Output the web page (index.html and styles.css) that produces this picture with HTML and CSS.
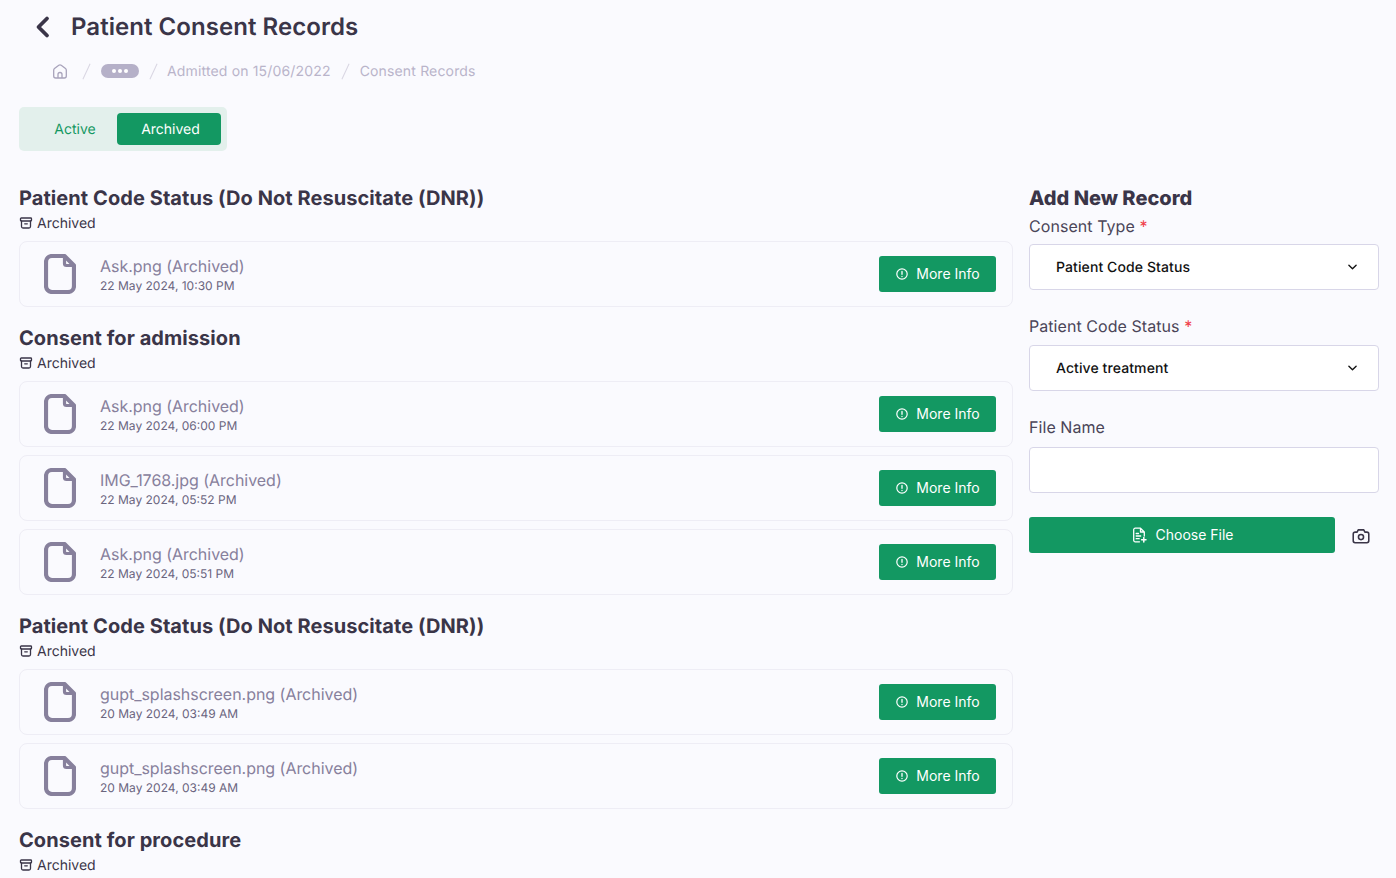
FILE: index.html
```html
<!DOCTYPE html>
<html lang="en">
<head>
    <meta charset="UTF-8">
    <meta name="viewport" content="width=device-width, initial-scale=1.0">
    <title>Patient Consent Records</title>
    <link rel="stylesheet" href="styles.css">
</head>
<body>

<svg class="sprite" width="0" height="0">
    <symbol id="i-archive" viewBox="0 0 14 14">
        <rect x="1.500" y="2" width="11" height="3" rx="0.8" fill="none" stroke="currentColor" stroke-width="1.300"/>
        <path d="M2.500 5v5.500a1.500 1.500 0 0 0 1.500 1.500h6a1.500 1.500 0 0 0 1.500-1.500V5M5.700 7.800h2.600" fill="none" stroke="currentColor" stroke-width="1.300" stroke-linecap="round"/>
    </symbol>
    <symbol id="i-file" viewBox="0 0 32 40">
        <path d="M8 2h12.500L30 11.500V32a6 6 0 0 1-6 6H8a6 6 0 0 1-6-6V8a6 6 0 0 1 6-6z" fill="none" stroke="currentColor" stroke-width="4.200" stroke-linejoin="round"/>
        <path d="M20.500 3v6.500a2 2 0 0 0 2 2H29" fill="none" stroke="currentColor" stroke-width="3.200" stroke-linejoin="round"/>
    </symbol>
    <symbol id="i-info" viewBox="0 0 14 14">
        <circle cx="7" cy="7" r="5.200" fill="none" stroke="currentColor" stroke-width="1.200"/>
        <path d="M7 4.500v2.800M7 9.300v.2" fill="none" stroke="currentColor" stroke-width="1.300" stroke-linecap="round"/>
    </symbol>
    <symbol id="i-chevron" viewBox="0 0 10 6">
        <path d="M1 1l4 4 4-4" fill="none" stroke="currentColor" stroke-width="1.500" stroke-linecap="round" stroke-linejoin="round"/>
    </symbol>
</svg>

<header class="top">
    <svg class="back" width="16" height="24" viewBox="0 0 16 24"><path d="M13 3.500L4.500 12l8.500 8.500" fill="none" stroke="currentColor" stroke-width="3.800" stroke-linecap="round" stroke-linejoin="round"/></svg>
    <h1>Patient Consent Records</h1>
</header>

<nav class="crumbs">
    <svg class="home" width="16" height="16" viewBox="0 0 16 16"><path d="M1.700 7.200c0-.7.300-1.200.8-1.600l4.300-3.300a2 2 0 0 1 2.400 0l4.300 3.300c.5.400.8.900.8 1.600V13a2 2 0 0 1-2 2H3.700a2 2 0 0 1-2-2zM6 15v-3.500a2 2 0 0 1 4 0V15" fill="none" stroke="currentColor" stroke-width="1.300" stroke-linejoin="round"/></svg>
    <span class="sep sep-first"></span>
    <span class="more"><i></i><i></i><i></i></span>
    <span class="sep sep-text"></span>
    <span>Admitted on 15/06/2022</span>
    <span class="sep"></span>
    <span>Consent Records</span>
</nav>

<div class="tabs">
    <span class="tab">Active</span>
    <span class="tab tab-on">Archived</span>
</div>

<div class="columns">
    <main class="records">
        <section class="group">
            <h2>Patient Code Status (Do Not Resuscitate (DNR))</h2>
            <p class="state"><svg width="14" height="14"><use href="#i-archive"/></svg>Archived</p>
            <div class="record">
                <svg class="doc" width="32" height="40"><use href="#i-file"/></svg>
                <div class="meta"><strong>Ask.png (Archived)</strong><small>22 May 2024, 10:30 PM</small></div>
                <button class="btn"><svg width="14" height="14"><use href="#i-info"/></svg>More Info</button>
            </div>
        </section>

        <section class="group">
            <h2>Consent for admission</h2>
            <p class="state"><svg width="14" height="14"><use href="#i-archive"/></svg>Archived</p>
            <div class="record">
                <svg class="doc" width="32" height="40"><use href="#i-file"/></svg>
                <div class="meta"><strong>Ask.png (Archived)</strong><small>22 May 2024, 06:00 PM</small></div>
                <button class="btn"><svg width="14" height="14"><use href="#i-info"/></svg>More Info</button>
            </div>
            <div class="record">
                <svg class="doc" width="32" height="40"><use href="#i-file"/></svg>
                <div class="meta"><strong>IMG_1768.jpg (Archived)</strong><small>22 May 2024, 05:52 PM</small></div>
                <button class="btn"><svg width="14" height="14"><use href="#i-info"/></svg>More Info</button>
            </div>
            <div class="record">
                <svg class="doc" width="32" height="40"><use href="#i-file"/></svg>
                <div class="meta"><strong>Ask.png (Archived)</strong><small>22 May 2024, 05:51 PM</small></div>
                <button class="btn"><svg width="14" height="14"><use href="#i-info"/></svg>More Info</button>
            </div>
        </section>

        <section class="group">
            <h2>Patient Code Status (Do Not Resuscitate (DNR))</h2>
            <p class="state"><svg width="14" height="14"><use href="#i-archive"/></svg>Archived</p>
            <div class="record">
                <svg class="doc" width="32" height="40"><use href="#i-file"/></svg>
                <div class="meta"><strong>gupt_splashscreen.png (Archived)</strong><small>20 May 2024, 03:49 AM</small></div>
                <button class="btn"><svg width="14" height="14"><use href="#i-info"/></svg>More Info</button>
            </div>
            <div class="record">
                <svg class="doc" width="32" height="40"><use href="#i-file"/></svg>
                <div class="meta"><strong>gupt_splashscreen.png (Archived)</strong><small>20 May 2024, 03:49 AM</small></div>
                <button class="btn"><svg width="14" height="14"><use href="#i-info"/></svg>More Info</button>
            </div>
        </section>

        <section class="group">
            <h2>Consent for procedure</h2>
            <p class="state"><svg width="14" height="14"><use href="#i-archive"/></svg>Archived</p>
        </section>
    </main>

    <aside class="add">
        <h2 class="add-title">Add New Record</h2>
        <label class="field-label field-first">Consent Type <b>*</b></label>
        <div class="select">Patient Code Status<svg width="9" height="6"><use href="#i-chevron"/></svg></div>
        <label class="field-label field-gap">Patient Code Status <b>*</b></label>
        <div class="select">Active treatment<svg width="9" height="6"><use href="#i-chevron"/></svg></div>
        <label class="field-label field-gap-file">File Name</label>
        <input class="text-input" type="text">
        <div class="upload">
            <button class="btn btn-wide">
                <svg width="16" height="16" viewBox="0 0 16 16"><path d="M9.500 1.200H4.200A1.500 1.500 0 0 0 2.700 2.700v10.600a1.500 1.500 0 0 0 1.500 1.500h4.300M9.500 1.200l3.800 3.800v4M9.500 1.200V5h3.800M5.200 6.500h2.300M5.200 9h4.500M5.200 11.700h3" fill="none" stroke="currentColor" stroke-width="1.300" stroke-linecap="round" stroke-linejoin="round"/><path d="M12.800 10.500v4.500M10.600 12.800h4.400" fill="none" stroke="currentColor" stroke-width="1.500" stroke-linecap="round"/></svg>
                Choose File
            </button>
            <svg class="camera" width="20" height="20" viewBox="0 0 18 18"><path d="M6.500 3.500h5l1 2h1.800A1.700 1.700 0 0 1 16 7.200v6.100a1.700 1.700 0 0 1-1.700 1.700H3.700A1.700 1.700 0 0 1 2 13.300V7.200a1.700 1.700 0 0 1 1.700-1.700h1.800z" fill="none" stroke="currentColor" stroke-width="1.400" stroke-linejoin="round"/><circle cx="9" cy="10" r="2.300" fill="none" stroke="currentColor" stroke-width="1.400"/></svg>
        </div>
    </aside>
</div>

</body>
</html>
```

FILE: styles.css
```css
* {
    box-sizing: border-box;
}
html, body {
    height: 100%;
}
body {
    margin: 0;
    padding: 0 17px 0 19px;
    height: 878px;
    overflow: hidden;
    background-color: #fafafe;
    color: #3a3548;
    font-family: Inter, "Liberation Sans", sans-serif;
    text-rendering: geometricPrecision;
}
.sprite {
    position: absolute;
}
.top {
    display: flex;
    align-items: center;
    height: 54px;
    padding-left: 15px;
}
.back {
    color: #3a3548;
}
h1 {
    margin: 0 0 0 21px;
    font-size: 24px;
    font-weight: 600;
    line-height: 30px;
    letter-spacing: 0.05px;
}
.crumbs {
    display: flex;
    align-items: center;
    height: 34px;
    padding-left: 33px;
    color: #b9b4ca;
    font-size: 14px;
    letter-spacing: 0.16px;
}
.home {
    color: #a8a3bb;
}
.sep {
    width: 1px;
    height: 17px;
    margin: 0 14px;
    background: #d8d5e2;
    transform: rotate(25deg);
}
.sep-first {
    margin-left: 18px;
}
.sep-text {
    margin-right: 13px;
}
.more {
    display: flex;
    align-items: center;
    justify-content: center;
    gap: 2px;
    width: 38px;
    height: 14px;
    border-radius: 7px;
    background: #b5b0c8;
}
.more i {
    width: 4px;
    height: 4px;
    border-radius: 50%;
    background: #fff;
}
.tabs {
    display: flex;
    align-items: center;
    width: 208px;
    height: 44px;
    margin-top: 19px;
    padding: 0 6px;
    border-radius: 5px;
    background: #e3f0ec;
}
.tab {
    flex: none;
    width: 92px;
    height: 32px;
    padding: 1px 0 0 8px;
    color: #139862;
    font-size: 14px;
    line-height: 32px;
    text-align: center;
}
.tab-on {
    width: 104px;
    padding: 1px 0 0 3px;
    border-radius: 4px;
    background: #139862;
    color: #fff;
}
.columns {
    display: flex;
    justify-content: space-between;
    margin-top: 33px;
}
.records {
    width: 994px;
}
.group {
    margin-bottom: 17px;
}
h2 {
    margin: 0;
    font-size: 20px;
    font-weight: 700;
    line-height: 28px;
    letter-spacing: 0.07px;
}
.state {
    display: flex;
    align-items: center;
    gap: 4px;
    height: 22px;
    margin: 0 0 7px;
    font-size: 14px;
}
.record {
    display: flex;
    align-items: center;
    height: 66px;
    margin-bottom: 8px;
    padding: 0 16px 0 24px;
    border: 1px solid #eeedf5;
    border-radius: 8px;
}
.doc {
    flex: none;
    color: #87809c;
}
.meta {
    flex: 1;
    display: flex;
    flex-direction: column;
    margin-left: 24px;
}
.meta strong {
    color: #87809c;
    font-size: 16px;
    font-weight: 400;
    line-height: 22px;
    letter-spacing: -0.03px;
}
.meta small {
    margin-top: 1px;
    color: #6b657e;
    font-size: 12px;
    line-height: 16px;
}
.btn {
    display: flex;
    align-items: center;
    justify-content: center;
    gap: 7px;
    width: 117px;
    height: 36px;
    padding: 0 0 1px;
    border: none;
    border-radius: 3px;
    background: #139862;
    color: #fff;
    font-family: inherit;
    font-size: 14px;
    cursor: pointer;
}
.add {
    width: 350px;
}
.add-title {
    font-weight: 800;
    letter-spacing: 0;
}
.field-label {
    display: block;
    color: #4a4558;
    font-size: 16px;
    line-height: 24px;
    margin-bottom: 6px;
    letter-spacing: 0.06px;
}
.field-first {
    margin-top: 2px;
}
.field-label b {
    color: #f0404a;
    font-weight: 400;
}
.field-gap {
    margin-top: 24px;
    margin-bottom: 7px;
}
.field-gap-file {
    margin-top: 24px;
    margin-bottom: 8px;
}
.select {
    display: flex;
    justify-content: space-between;
    align-items: center;
    height: 46px;
    padding: 0 21px 0 26px;
    border: 1px solid #d8d6e8;
    border-radius: 4px;
    background: #fff;
    color: #111;
    font-size: 14px;
    font-weight: 500;
    letter-spacing: 0.1px;
}
.text-input {
    display: block;
    width: 100%;
    height: 46px;
    border: 1px solid #d8d6e8;
    border-radius: 4px;
    background: #fff;
}
.upload {
    display: flex;
    align-items: center;
    margin-top: 24px;
}
.btn-wide {
    width: 306px;
    gap: 9px;
}
.camera {
    margin: 2px 0 0 16px;
    color: #3a3548;
}
```
